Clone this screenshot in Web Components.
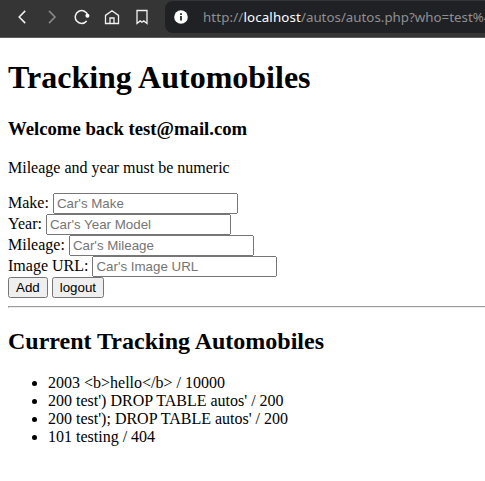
<!DOCTYPE html>
<html lang="en"><head><meta charset="utf-8"><title>Autos</title>
<style>html,body{margin:0;background:#fff}body{height:481px;overflow:hidden}</style></head><body>
<browser-bar></browser-bar>
<autos-page></autos-page>
<script>
class BrowserBar extends HTMLElement{
constructor(){super();this.attachShadow({mode:'open'}).innerHTML=`<style>
:host{display:flex;height:38px;box-sizing:border-box;background:#353535;border-bottom:1px solid #5c5c5c;overflow:hidden;align-items:flex-start}
nav{display:flex;width:165px;height:34px;flex:none;align-items:center;box-sizing:border-box;padding-left:14px;gap:14px}
svg{width:16px;height:16px;flex:none;fill:none;stroke:#f2f2f2;stroke-width:1.3;display:block}
.url{flex:none;width:330px;height:32px;margin-top:1px;background:#202124;border-radius:8px;display:flex;align-items:center;padding-left:8px;box-sizing:border-box;gap:14px;font:13.333px "Noto Sans",sans-serif;color:#8f9092;white-space:nowrap}
i{font-style:normal;letter-spacing:.13px}
b{font-weight:400;color:#fff;letter-spacing:.13px}
</style><nav>
<svg viewBox="0 0 16 16"><path d="M11.2 1.9 5.2 8l6 6.1" stroke-width="1.5"/></svg>
<svg viewBox="0 0 16 16" style="opacity:.45"><path d="m5 1.9 6 6.1-6 6.1" stroke-width="1.5"/></svg>
<svg viewBox="0 0 16 16"><path d="M12.7 12A6.4 6.4 0 1 1 13.9 6.5" stroke-width="1.5"/><circle cx="13.4" cy="6.8" r="2" fill="#fff" stroke="none"/></svg>
<svg viewBox="0 0 16 16"><path d="M1.5 6.4 8 1.7l6.5 4.7v8.1h-13zM6 14.5V9h4v5.5"/></svg>
<svg viewBox="0 0 16 16"><path d="M3 1.5h10v13l-3.2-2.6L8 13.2l-1.8-1.3L3 14.5z"/></svg></nav>
<div class="url"><svg viewBox="0 0 16 16"><circle cx="8" cy="8" r="6.8" fill="#fff" stroke="none"/><path d="M8 7v4.6M8 4.2v1.7" stroke="#3a3a3c" stroke-width="2"/></svg><span><i>http://</i><b>localhost</b>/autos/autos.php?who=test%4</span></div>`}}
customElements.define('browser-bar',BrowserBar);
class FormField extends HTMLElement{
connectedCallback(){this.attachShadow({mode:'open'}).innerHTML=`<style>:host{display:block}</style><slot></slot> <input placeholder="${this.getAttribute('hint')}">`}}
customElements.define('form-field',FormField);
class AutosPage extends HTMLElement{
constructor(){super();this.attachShadow({mode:'open'}).innerHTML=`<style>
:host{display:block;padding:0 0 0 8px;font:16px "Liberation Serif",serif;color:#000}
h1{margin:21.44px 0}
hr{margin-right:-8px}
</style><h1>Tracking Automobiles</h1><h3>Welcome back test@mail.com</h3><p>Mileage and year must be numeric</p>
<form><form-field hint="Car's Make">Make:</form-field><form-field hint="Car's Year Model">Year:</form-field><form-field hint="Car's Mileage">Mileage:</form-field><form-field hint="Car's Image URL">Image URL:</form-field>
<button type="button">Add</button> <button type="button">logout</button></form><hr>
<h2>Current Tracking Automobiles</h2>
<ul><li>2003 &lt;b&gt;hello&lt;/b&gt; / 10000</li><li>200 test') DROP TABLE autos' / 200</li><li>200 test'); DROP TABLE autos' / 200</li><li>101 testing / 404</li></ul>`}}
customElements.define('autos-page',AutosPage);
</script></body></html>
